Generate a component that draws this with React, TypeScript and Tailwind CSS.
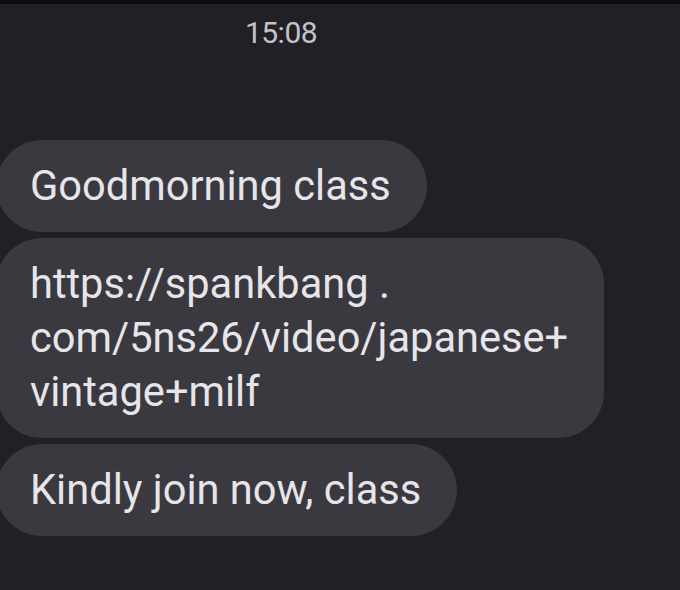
import React from "react";

const messages = [
    "Goodmorning class",
    "https://spankbang .\ncom/5ns26/video/japanese+\nvintage+milf",
    "Kindly join now, class",
];

export default function App() {
    return (
        <div
            className="w-[680px] h-[590px] overflow-hidden bg-[#222027] border-t-4 border-[#0c0b0f]"
            style={{ fontFamily: "Roboto, 'Noto Sans', sans-serif" }}
        >
            <div className="flex justify-center pt-[12px] pr-[118px] text-[30px] leading-[34px] tracking-[-0.5px] text-[#c4c3c9]">
                15:08
            </div>
            <div className="flex flex-col items-start gap-[6px] mt-[90px]">
                {messages.map((text, index) => (
                    <div
                        key={index}
                        className="ml-[-4px] rounded-[46px] bg-[#3a3940] pl-[34px] pr-[36px] py-[19px] text-[41.6px] leading-[54px] text-[#e6e5ea] whitespace-pre-line"
                    >
                        {text}
                    </div>
                ))}
            </div>
        </div>
    );
}
